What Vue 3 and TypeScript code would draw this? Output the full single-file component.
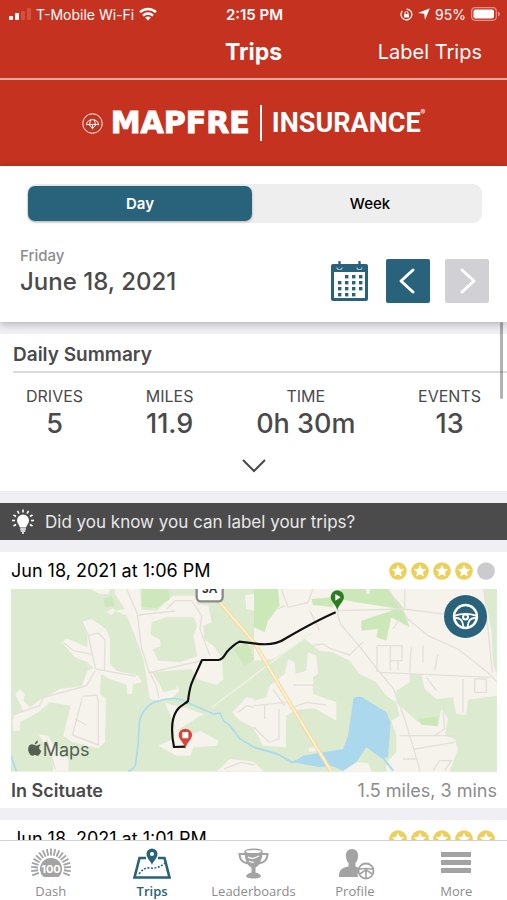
<script setup lang="ts">
import { ref } from 'vue'

interface Stat { label: string; value: string }
interface Tab { id: string; label: string }
interface Star { id: number; lit: boolean }

const period = ref<'Day' | 'Week'>('Day')
const activeTab = ref('trips')

const stats: Stat[] = [
  { label: 'DRIVES', value: '5' },
  { label: 'MILES', value: '11.9' },
  { label: 'TIME', value: '0h 30m' },
  { label: 'EVENTS', value: '13' },
]

const tabs: Tab[] = [
  { id: 'dash', label: 'Dash' },
  { id: 'trips', label: 'Trips' },
  { id: 'leaderboards', label: 'Leaderboards' },
  { id: 'profile', label: 'Profile' },
  { id: 'more', label: 'More' },
]

const starRow = (score: number): Star[] =>
  [1, 2, 3, 4, 5].map((id) => ({ id, lit: id <= score }))

const starPath = 'M9 2.8l1.8 4 4.4.5-3.3 2.9.9 4.3L9 12.3l-3.8 2.2.9-4.3-3.3-2.9 4.4-.5z'

const calendarDots: number[][] = [
  [14, 15], [21, 15], [28, 15],
  [7, 21], [14, 21], [21, 21], [28, 21],
  [7, 27], [14, 27], [21, 27], [28, 27],
  [7, 33], [14, 33], [21, 33],
]

const gaugeTicks = Array.from({ length: 19 }, (_, i) => -110 + i * (220 / 18))
const bulbRays = [-120, -90, -60, -30, 0, 30, 60, 90, 120]
</script>

<template>
  <div class="app">
    <header class="top">
      <div class="status">
        <div class="status-left">
          <svg class="signal" viewBox="0 0 22 12" aria-hidden="true">
            <rect x="0" y="8" width="4" height="4" rx="1" fill="#fff" />
            <rect x="6" y="5" width="4" height="7" rx="1" fill="#fff" />
            <rect x="12" y="3" width="4" height="9" rx="1" fill="#d4503f" />
            <rect x="18" y="0" width="4" height="12" rx="1" fill="#d4503f" />
          </svg>
          <span>T-Mobile Wi-Fi</span>
          <svg class="wifi" viewBox="0 0 18 14" fill="none" stroke="#fff" stroke-width="2.5" aria-hidden="true">
            <path d="M1 5.2a11.6 11.6 0 0 1 16 0" />
            <path d="M4 8.6a7.3 7.3 0 0 1 10 0" />
            <path d="M9 13.6 6.2 10.8a4 4 0 0 1 5.6 0z" fill="#fff" stroke="none" />
          </svg>
        </div>
        <span class="clock">2:15 PM</span>
        <div class="status-right">
          <svg class="lock" viewBox="0 0 13 13" fill="none" stroke="#fff" aria-hidden="true">
            <path d="M2.3 3A5.4 5.4 0 1 0 6.5 1.1M9 1.7A5.4 5.4 0 0 1 11.8 5" stroke-width="1.2" />
            <rect x="4" y="6" width="5" height="3.6" rx=".5" fill="#fff" stroke="none" />
            <path d="M5 6V5a1.5 1.5 0 0 1 3 0v1" />
          </svg>
          <svg class="arrow" viewBox="0 0 12 12" aria-hidden="true"><path d="M11.8.2 7 12 6.2 5.8 0 5z" fill="#fff" /></svg>
          <span>95%</span>
          <svg class="battery" viewBox="0 0 29 14" aria-hidden="true">
            <rect x=".7" y=".7" width="24.6" height="12.6" rx="3.5" fill="none" stroke="#e59083" stroke-width="1.2" />
            <rect x="2.5" y="2.5" width="20.5" height="9" rx="2" fill="#fff" />
            <path d="M27 4.5a2.6 2.6 0 0 1 0 5z" fill="#e59083" />
          </svg>
        </div>
      </div>
      <div class="nav">
        <h1>Trips</h1>
        <button type="button" class="label-trips">Label Trips</button>
      </div>
      <div class="brand">
        <svg class="brand-mark" viewBox="0 0 22 22" fill="none" stroke="#fff" aria-hidden="true">
          <circle cx="11" cy="11" r="10.2" stroke-width="1" />
          <path d="M4.5 12.5a6.6 6.6 0 0 1 13 0q-1.8-1.3-3.3 0-1.6-1.4-3.2 0-1.6-1.4-3.2 0-1.7-1.3-3.3 0zM11 12v5M7.8 12.5 11 16.5l3.2-4M7.8 12.500 9.200 6.500M14.2 12.5 12.8 6.5" stroke-width="1" />
        </svg>
        <span class="mapfre">MAPFRE</span>
        <span class="bar"></span>
        <span class="insurance">INSURANCE</span>
        <span class="reg">®</span>
      </div>
    </header>

    <section class="filter">
      <div class="segment">
        <button type="button" :class="{ on: period === 'Day' }" @click="period = 'Day'">Day</button>
        <button type="button" :class="{ on: period === 'Week' }" @click="period = 'Week'">Week</button>
      </div>
      <div class="date-row">
        <div class="date">
          <p class="weekday">Friday</p>
          <p class="full-date">June 18, 2021</p>
        </div>
        <button type="button" class="calendar" aria-label="Choose a date">
          <svg viewBox="0 0 37 40" aria-hidden="true">
            <rect x="0" y="3" width="37" height="37" rx="2" fill="#29627b" />
            <rect x="3" y="11" width="31" height="26" fill="#fff" />
            <rect v-for="(d, i) in calendarDots" :key="i" :x="d[0]" :y="d[1] - 1" width="3.4" height="3.4" fill="#29627b" />
            <path d="M6 6.500a2.500 2 0 0 0 5 0M26 6.500a2.500 2 0 0 0 5 0" fill="none" stroke="#a9c3ce" stroke-width="1.2" />
            <path d="M8.5 1v6M28.5 1v6" stroke="#29627b" stroke-width="2.4" stroke-linecap="round" />
          </svg>
        </button>
        <button type="button" class="step" aria-label="Previous day">
          <svg viewBox="0 0 44 44" aria-hidden="true"><path d="M27 11 15 22l12 11" /></svg>
        </button>
        <button type="button" class="step off" aria-label="Next day" disabled>
          <svg viewBox="0 0 44 44" aria-hidden="true"><path d="M17 11 29 22 17 33" /></svg>
        </button>
      </div>
    </section>

    <main class="body">
      <div class="thumb"></div>
      <div class="list">
        <section class="summary">
          <h2>Daily Summary</h2>
          <dl class="stats">
            <div v-for="s in stats" :key="s.label" class="stat">
              <dt>{{ s.label }}</dt>
              <dd>{{ s.value }}</dd>
            </div>
          </dl>
          <button type="button" class="expand" aria-label="Show more">
            <svg viewBox="0 0 26 14" aria-hidden="true"><path d="M2 1 13 12 24 1" /></svg>
          </button>
        </section>

        <aside class="tip">
          <svg class="bulb" viewBox="0 0 24 26" aria-hidden="true">
            <path d="M12 5.500a6 6 0 0 1 6 6c0 3-2.300 4.200-3 7H9c-.7-2.800-3-4-3-7a6 6 0 0 1 6-6z" fill="#fff" />
            <path d="M9.2 20h5.6M9.6 22h4.8M11 24h2" stroke="#fff" stroke-width="1.5" />
            <path v-for="a in bulbRays" :key="a" d="M12 .5v3" :transform="`rotate(${a} 12 11.5)`" stroke="#fff" stroke-width="1.6" />
          </svg>
          <span>Did you know you can label your trips?</span>
        </aside>

        <article class="trip">
          <div class="trip-head">
            <h3>Jun 18, 2021 at 1:06 PM</h3>
            <div class="stars" role="img" aria-label="4 of 5 stars">
              <svg v-for="s in starRow(4)" :key="s.id" viewBox="0 0 18 18">
                <circle cx="9" cy="9" r="8.8" :fill="s.lit ? '#ecd05c' : '#cbcacf'" />
                <path v-if="s.lit" :d="starPath" fill="#fff" />
              </svg>
            </div>
          </div>
          <div class="map">
            <svg class="map-art" viewBox="0 0 1458 548" role="img" aria-label="Trip route">
              <rect width="1458" height="548" fill="#dcebcf" />
              <g transform="translate(-33 -30)">
                <g fill="#f6f3ec">
                  <path d="M245 128l30-8 43 30 12 30v75l20 20 65 15 10 20-25 5-5 30h-13l-2-27-50-18-27-15-3 60 18 15-3 130-20 18-80-20-25-18 22-90-62-10-35 30-55 30v25H40l-5-45 35-15-25-50 15-15 15 15-5 20 20 20 25-20 65-35 65-8 17-47 18-7-18-18-37-15-40-45 15-12 62 27v-35z" />
                  <path d="M345 30h75l4 62 46 3 30-30 20-15h70v25l35 5 10 50-25 10 2 40 28 20 25 35 5 65-20 18-60-18-15-30-120 10 20 30 15 30 40-10v-15l8 20-18 18-35 15-35-8-20-120-25-70-25-60-35-15 30-5-30-45z" />
                  <path d="M495 372l55 13 60 20-80 50 40 15 30-15 55 30-5 15-70 5-10 25h-40l-55-30 45-20 5-40z" />
                  <path d="M697 400l43-45 24 5v88l-44-23zM115 465l30 5 15 30 45 40v37h-45l-5-47zM650 577l40-37 74 8v29zM270 30h60l-5 15h-25zM320 98l18-10 10 8-15 12zM735 48l29-3v50l-25-5z" />
                </g>
                <path d="M455 130l45-15h80l12 25-12 30 12 62-52 18-65-5-17-35 24-8-2-20-28-15z" fill="#dcebcf" />
                <path d="M425 30h80l5 30-40 28-45-5zM310 60l25-10 10 30-30 5zM700 210l40-20 24 50-30 20z" fill="#cfe8bb" />
                <g fill="none" stroke="#e4dfda" stroke-width="4">
                  <path d="M245 128l20 40 12 60 10 42 120 22M265 170l30-8 20 20-2 95M190 190l30 25 60 12M285 275l-25 45-130 36-12 25-75 25-10 20M248 352l42-4 5 20v130l-78-30 30-112M225 420l35 18" />
                  <path d="M380 30l32 75 12 100 20 65 25 50 8 38M415 108l110-12M500 90l25-25h50l30 45-5 40 30 80M445 282l155-36" />
                  <path d="M715 400l25-20 24 5M140 480l25 90M672 570l50-20 42 8" />
                </g>
                <path d="M635 385l127-95" stroke="#eef1e5" stroke-width="5" />
                <path d="M33 530l16 47M385 577q23-7 23-32l7-55 3-60q12-55 62-65 50-15 80 5l80 35 20-3 10 23 20 15 30 40 42 25" fill="none" stroke="#acd9ef" stroke-width="5" />
              </g>
              <g transform="translate(726 -120)">
                <path d="M3 120h729v548H3z" fill="#f6f3ec" />
                <g fill="#dcebcf">
                  <path d="M3 335l57-5 95-60 45 35 40 5 50 25 30 40 50 25 30 40 30 20 10 40-25 15 15 45v50l-30 30v28H3z" />
                  <path d="M470 375h35l10 45 35 30 50-5 10 50 30 2 5-45 87-12v228H590l25-68-10-30-30-10 10-50-20-30-10 50-60-10-65-60v-35l40-25zM690 120h42v260l-12-40-5-100z" />
                </g>
                <g fill="#cde8b8">
                  <path d="M3 120h72l5 50-35 45-10 35-32-15zM175 150l65-5v30l-60-7zM262 120h143l50 62-145-22-40-8zM325 215l105-35h20l20 55-55-30-15 70-30-10 5-25-50 5zM495 510l60-8v30l-50-5z" />
                </g>
                <g fill="#f6f3ec">
                  <path d="M3 455l37-10 10-35 45-35 10-45 20 10 3 35 32-10 5-55 25 10 5 55-15 10v50l70 25v55l-65-37-55 4-30 18-2 95-68-5-27-50zM3 640l30 28H3zM270 668l35-28 40 2 12 26zM165 600l20-8 5 14-20 3zM340 120h10v15h-10z" />
                </g>
                <path d="M302 445l23-2 75 47 13 30-8 105-20 3-45-33-30 45-40 25-35-15-35 5-80-15 30-20 120-20 15-40z" fill="#acd8ee" />
                <g fill="none" stroke="#e4dfda" stroke-width="4">
                  <path d="M252 185l10 40 60 70 50 65 50 60 30 80 50 167M252 185l200-5 120 15M405 120l60 90 60 50 90 40 95 75 22 25M455 120v60M380 370l330 15" />
                  <path d="M175 290l35-5 25 15 55 18 40-40M372 290v80M412 290v75M372 290h75v45h-35M435 335v30M440 210l-20 30M510 290v50M555 315l-10 50M475 295l-5 75M520 385l30 40M630 390v100M665 390h35v40h-35zM570 490l5 50-30 20M440 560h175M485 600l120-20M540 665l20-30h35l-20 30M450 630h40" />
                  <path d="M85 120l20 55 60-15 15-40M95 170l-20 10M170 185l30 60M60 420l35 50M120 408h60M35 465v45M3 470l97-10M110 480l50-20 60 8M78 480v90l-30 10-45-45M693 120l25 250" />
                </g>
                <path d="M3 380l65-50 110-80" fill="none" stroke="#eef1e0" stroke-width="5" />
                <path d="M3 595l70 20 45 25 35-10M385 620l35 45" fill="none" stroke="#acd9ef" stroke-width="6" />
              </g>
              <path d="M622 35l107 125 100 170 132 218" fill="none" stroke="#f3d9a3" stroke-width="12" />
              <path d="M622 35l107 125 100 170 132 218" fill="none" stroke="#fdf1cf" stroke-width="6" />
              <rect x="557" y="-30" width="78" height="67" rx="12" fill="#fff" stroke="#8b8b8b" stroke-width="7" />
              <text x="596" y="13" class="shield" text-anchor="middle">3A</text>
              <path d="M523 473l-34 1c-11-54-5-89 8-109 10-17 28-21 34-29 3-21 4-41 14-61l28-62h49c18-3 18-18 30-29q18-19 33-26l44 5c46 7 71 2 92-13q95-55 153-80" fill="none" stroke="#111" stroke-width="6.5" stroke-linejoin="round" />
              <path d="M523 480c-3-18-20-29-20-41a20 20 0 0 1 40 0c0 12-17 23-20 41z" fill="#d8453a" />
              <rect x="514" y="429" width="18" height="19" rx="2" fill="#fff" />
              <path d="M979 64c-3-16-20-27-20-40a20 20 0 0 1 40 0c0 13-17 24-20 40z" fill="#2c7d22" />
              <path d="M973 15l16 10-16 10z" fill="#fff" />
              <path d="M76 470c5-5 13-5 14-2-9 6-9 17 2 23-4 12-10 20-16 20-4 0-6-3-10-3s-7 3-10 3c-8 0-17-14-17-27 0-12 8-19 16-19 5 0 9 4 12 4 2 0 5 1 9 1zM66 465c0-7 5-13 12-15 1 8-5 15-12 15z" fill="#566052" transform="translate(22 117) scale(.75)" />
              <text x="95" y="500" class="maps">Maps</text>
            </svg>
            <button type="button" class="driver" aria-label="Driver">
              <svg viewBox="0 0 26 26" fill="none" stroke="#fff" aria-hidden="true">
                <circle cx="13" cy="13" r="11" stroke-width="2.4" />
                <path d="M2 12.500q5.500-2 11-2t11 2M3 14.500c5-.5 7.500 2.500 8 8.500M23 14.500c-5-.5-7.500 2.500-8 8.500" stroke-width="1.8" />
                <circle cx="13" cy="13.500" r="2.400" stroke-width="2" />
              </svg>
            </button>
          </div>
          <div class="trip-foot">
            <strong>In Scituate</strong>
            <span>1.5 miles, 3 mins</span>
          </div>
        </article>

        <article class="trip">
          <div class="trip-head">
            <h3>Jun 18, 2021 at 1:01 PM</h3>
            <div class="stars" role="img" aria-label="5 of 5 stars">
              <svg v-for="s in starRow(5)" :key="s.id" viewBox="0 0 18 18">
                <circle cx="9" cy="9" r="8.8" fill="#ecd05c" />
                <path :d="starPath" fill="#fff" />
              </svg>
            </div>
          </div>
        </article>
      </div>
    </main>

    <nav class="tabs">
      <button v-for="t in tabs" :key="t.id" type="button" :class="{ on: activeTab === t.id }" @click="activeTab = t.id">
        <svg v-if="t.id === 'dash'" viewBox="0 0 40 32" aria-hidden="true">
          <path v-for="a in gaugeTicks" :key="a" d="M20 .5v7" :transform="`rotate(${a} 20 20.5)`" stroke="currentColor" stroke-width="1.8" />
          <path d="M12.5 29a11 11 0 1 1 15 0z" fill="currentColor" />
          <text x="20" y="25" class="score" text-anchor="middle">100</text>
        </svg>
        <svg v-else-if="t.id === 'trips'" viewBox="0 0 40 32" fill="none" stroke="currentColor" aria-hidden="true">
          <path d="M14 10H7.5l-5 19.500h35L32.500 10H26" stroke-width="2.6" />
          <path d="M7 26q5-7 11-6 8 1 15-5" stroke-width="1.5" stroke-dasharray="2 1.5" />
          <path d="M20 17c-1-4-5.500-6.500-5.500-11a5.500 5.500 0 0 1 11 0c0 4.500-4.500 7-5.500 11z" fill="currentColor" stroke="none" />
          <circle cx="20" cy="6" r="2.1" fill="#fff" stroke="none" />
        </svg>
        <svg v-else-if="t.id === 'leaderboards'" viewBox="0 0 40 32" fill="none" stroke="currentColor" aria-hidden="true">
          <path d="M11.5 3.500c0 9 3.500 14.500 7 16v5c-3 .5-5 2-5.500 3.500 0 1.500 3 2.500 7.500 2.500s7.500-1 7.500-2.500c-.5-1.500-2.500-3-5.500-3.500v-5c3.500-1.500 7-7 7-16z" fill="currentColor" stroke="none" />
          <ellipse cx="20.5" cy="3.5" rx="8.5" ry="2.2" fill="#fff" stroke-width="1.4" />
          <path d="M12 6H6.500c0 5 2.500 8.500 8.500 9.500M29 6h5.500c0 5-2.500 8.500-8.500 9.500" stroke-width="2" />
          <path d="M15 9q4 3 11-1M16 13q3 2 5 1" stroke="#fff" stroke-width="1.3" />
        </svg>
        <svg v-else-if="t.id === 'profile'" viewBox="0 0 40 32" fill="none" stroke="currentColor" aria-hidden="true">
          <path d="M17 1c4 0 6.500 3 6 7.500-.2 3-1 5-2.500 6.500v3.500l5 2c-2.500 2-3.500 5-2.500 8.500H4c0-7 2-9 9.500-10.500V15c-1.500-1.500-2.300-3.500-2.500-6.500C10.500 4 13 1 17 1z" fill="currentColor" stroke="none" />
          <circle cx="31" cy="23" r="7.5" fill="#fff" stroke-width="1.8" />
          <path d="M23.5 21.500q7-2 15 0M31 23v7.500M29 23l-4 3M33 23l4 3" stroke-width="1.6" />
          <circle cx="31" cy="22.5" r="2" fill="currentColor" stroke="none" />
        </svg>
        <svg v-else viewBox="0 0 40 32" aria-hidden="true">
          <path d="M5 4h30v5H5zM5 12h30v5H5zM5 20h30v5H5z" fill="currentColor" />
        </svg>
        <span>{{ t.label }}</span>
      </button>
    </nav>
  </div>
</template>

<style>
body { margin: 0; background: #fff; }
</style>

<style scoped>
* { box-sizing: border-box; }
.app { display: flex; flex-direction: column; height: 100vh; overflow: hidden; font-family: Inter, "Liberation Sans", sans-serif; color: #4a4a4a; background: #fff; }
h1, h2, h3, p, dl, dd { margin: 0; }
button { padding: 0; border: 0; background: none; font-family: inherit; color: inherit; cursor: pointer; }
svg { display: block; flex: none; }

.top { flex: none; background: #c63220; color: #fff; }
.status { display: grid; grid-template-columns: 1fr auto 1fr; align-items: center; height: 28px; padding: 0 7px 0 9px; font-size: 14px; }
.status-left, .status-right { display: flex; align-items: center; gap: 5px; white-space: nowrap; }
.status-right { justify-content: flex-end; }
.signal { width: 22px; height: 12px; }
.wifi { width: 18px; height: 14px; }
.clock { font-size: 15px; font-weight: 600; }
.lock { width: 13px; height: 13px; }
.arrow { width: 12px; height: 12px; }
.battery { width: 29px; height: 14px; }
.nav { display: grid; grid-template-columns: 1fr auto 1fr; align-items: center; height: 52px; padding: 0 25px 2px; border-bottom: 2px solid #f0a79d; }
.nav h1 { grid-column: 2; font-size: 23px; line-height: 32px; font-weight: 700; }
.label-trips { justify-self: end; font-size: 20px; line-height: 32px; }
.brand { display: flex; align-items: center; justify-content: center; height: 86px; }
.brand-mark { width: 21px; height: 21px; margin-right: 8px; }
.mapfre { font-family: "DejaVu Sans", sans-serif; font-weight: 700; font-size: 30px; line-height: 36px; -webkit-text-stroke: 1px #fff; }
.bar { width: 2px; height: 36px; margin: 0 10px; background: #fff; }
.insurance { font-family: Roboto, sans-serif; font-weight: 700; font-size: 27px; line-height: 36px; }
.reg { padding-bottom: 20px; font-size: 7px; line-height: 8px; }

.filter { flex: none; position: relative; z-index: 2; padding: 18px 18px 19px 20px; background: #fff; box-shadow: 0 2px 8px rgba(0, 0, 0, .28); }
.segment { display: grid; grid-template-columns: 1fr 1fr; gap: 6px; height: 39px; margin: 0 7px; padding: 2px 0 2px 1px; border-radius: 9px; background: #eee; }
.segment button { border-radius: 7px; font-size: 15px; font-weight: 500; color: #000; }
.segment .on { background: #29627b; color: #fff; font-weight: 600; box-shadow: 0 1px 3px rgba(0, 0, 0, .25); }
.date-row { display: flex; align-items: flex-end; height: 57px; margin-top: 23px; }
.date { flex: 1; align-self: flex-start; }
.weekday { font-size: 15px; line-height: 20px; font-weight: 500; color: #8c8c8c; }
.full-date { font-size: 24px; line-height: 32px; font-weight: 500; }
.calendar { padding-bottom: 2px; }
.calendar svg { width: 37px; height: 40px; }
.step { width: 44px; height: 44px; margin-left: 18px; border-radius: 2px; background: #29627b; }
.step + .step { margin-left: 15px; }
.step svg { width: 44px; height: 44px; fill: none; stroke: #fff; stroke-width: 3; stroke-linecap: round; stroke-linejoin: round; }
.step.off { background: #d1d0d4; }

.body { position: relative; flex: 1; min-height: 0; background: #f0eff3; }
.list { display: flex; flex-direction: column; gap: 12px; height: 100%; padding-top: 12px; overflow-y: auto; scrollbar-width: none; }
.list > * { flex: none; }
.thumb { position: absolute; z-index: 3; top: 0; right: 4px; width: 3px; height: 77px; border-radius: 2px; background: rgba(0, 0, 0, .3); }
.summary { padding-bottom: 18px; background: #fff; }
.summary h2 { margin-left: 13px; padding: 8px 0 4px; border-bottom: 2px solid #dadada; font-size: 19px; line-height: 25px; font-weight: 600; }
.stats { display: flex; justify-content: space-between; padding: 12px 26px 0; }
.stat { display: flex; flex-direction: column; align-items: center; }
.stat dt { font-size: 16px; line-height: 22px; }
.stat dd { font-size: 27px; line-height: 34px; font-weight: 500; }
.expand { display: block; margin: 18px auto 0; }
.expand svg { width: 26px; height: 14px; fill: none; stroke: #4a4a4a; stroke-width: 2; }
.tip { display: flex; align-items: center; gap: 10px; height: 37px; padding: 0 11px; background: #4b4b4b; color: #e8e8e8; font-size: 17px; }
.bulb { width: 24px; height: 26px; }
.trip { padding: 6px 10px 4px 11px; background: #fff; }
.trip-head { display: flex; align-items: center; justify-content: space-between; margin-bottom: 5px; padding-right: 2px; }
.trip-head h3 { font-size: 18px; line-height: 26px; font-weight: 400; color: #000; }
.stars { display: flex; gap: 4px; }
.stars svg { width: 18px; height: 18px; }
.map { position: relative; }
.map-art { width: 100%; height: auto; }
.shield { font: 700 36px "Liberation Sans", sans-serif; fill: #333; }
.maps { font-family: Inter, sans-serif; font-size: 54px; fill: #566052; }
.driver { position: absolute; top: 6px; right: 10px; display: grid; place-items: center; width: 43px; height: 43px; border-radius: 50%; background: #29627b; }
.driver svg { width: 27px; height: 27px; }
.trip-foot { display: flex; justify-content: space-between; padding-top: 6px; font-size: 18px; line-height: 26px; }
.trip-foot strong { font-weight: 600; }
.trip-foot span { color: #8c8c8c; }

.tabs { flex: none; position: relative; z-index: 4; display: grid; grid-template-columns: repeat(5, 1fr); height: 60px; border-top: 1px solid #d4d4d4; background: #fff; }
.tabs button { display: flex; flex-direction: column; align-items: center; padding-top: 7px; color: #a3a3a3; font-family: "Open Sans", sans-serif; font-size: 13px; line-height: 18px; font-weight: 500; }
.tabs svg { width: 40px; height: 32px; margin-bottom: 2px; }
.tabs span { color: #8c8c8c; }
.tabs .on, .tabs .on span { color: #29627b; font-weight: 600; }
.score { font: 700 11px Inter, sans-serif; fill: #fff; }
</style>
